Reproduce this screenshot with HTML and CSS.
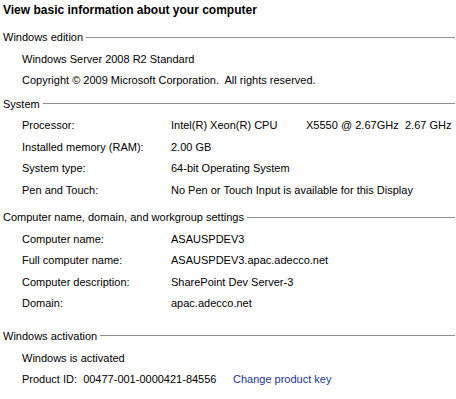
FILE: index.html
```html
<!DOCTYPE html>
<html lang="en">
<head>
     <meta charset="UTF-8">
     <title>System</title>
     <link rel="stylesheet" href="styles.css">
</head>
<body>

<h1 class="title">View basic information about your computer</h1>

<div class="group">
    <div class="group-head"><span>Windows edition</span></div>
    <div class="rows">
        <div class="row">Windows Server 2008 R2 Standard</div>
        <div class="row">Copyright &copy; 2009 Microsoft Corporation.&nbsp; All rights reserved.</div>
    </div>
</div>

<div class="group group-system">
    <div class="group-head"><span>System</span></div>
    <div class="rows">
        <div class="row">
            <span class="label">Processor:</span>
            <span class="value"><span class="cpu">Intel(R) Xeon(R) CPU</span><span class="cpu-model">X5550</span><span class="cpu-clock">@ 2.67GHz</span><span>2.67 GHz</span></span>
        </div>
        <div class="row">
            <span class="label">Installed memory (RAM):</span>
            <span class="value">2.00 GB</span>
        </div>
        <div class="row">
            <span class="label">System type:</span>
            <span class="value">64-bit Operating System</span>
        </div>
        <div class="row">
            <span class="label">Pen and Touch:</span>
            <span class="value">No Pen or Touch Input is available for this Display</span>
        </div>
    </div>
</div>

<div class="group group-name">
    <div class="group-head"><span>Computer name, domain, and workgroup settings</span></div>
    <div class="rows">
        <div class="row">
            <span class="label">Computer name:</span>
            <span class="value">ASAUSPDEV3</span>
        </div>
        <div class="row">
            <span class="label">Full computer name:</span>
            <span class="value">ASAUSPDEV3.apac.adecco.net</span>
        </div>
        <div class="row">
            <span class="label">Computer description:</span>
            <span class="value">SharePoint Dev Server-3</span>
        </div>
        <div class="row">
            <span class="label">Domain:</span>
            <span class="value">apac.adecco.net</span>
        </div>
    </div>
</div>

<div class="group group-activation">
    <div class="group-head"><span>Windows activation</span></div>
    <div class="rows">
        <div class="row">Windows is activated</div>
        <div class="row">
            <span class="pid">Product ID:  00477-001-0000421-84556</span>
            <a class="link" href="#">Change product key</a>
        </div>
    </div>
</div>

</body>
</html>
```

FILE: styles.css
```css
body {
    margin: 0;
    font-family: "Liberation Sans", Arial, sans-serif;
    font-size: 11px;
    color: #000;
    background-color: #fff;
}

.title {
    margin: 0;
    padding-left: 3px;
    height: 20px;
    line-height: 20px;
    font-size: 12px;
    font-weight: bold;
}

.group {
    margin-top: 9px;
}

.group-system {
    margin-top: 5px;
}

.group-name {
    margin-top: 9px;
}

.group-activation {
    margin-top: 14px;
}

/* section header with the rule after it */
.group-head {
    display: flex;
    align-items: center;
    height: 16px;
    padding-left: 3px;
    padding-right: 1px;
}

.group-head::after {
    content: "";
    flex: 1;
    border-top: 1px solid #8e8e8e;
    margin-left: 3px;
}

.rows {
    padding-top: 3px;
    padding-left: 22px;
}

.row {
    display: flex;
    align-items: center;
    height: 21.4px;
    white-space: nowrap;
}

.label {
    width: 149px;
}

.cpu {
    display: inline-block;
    width: 135px;
}

.cpu-model {
    display: inline-block;
    width: 35px;
}

.cpu-clock {
    display: inline-block;
    width: 64px;
}

.pid {
    white-space: pre;
    width: 211px;
}

.link {
    color: #1a3399;
    text-decoration: none;
}
```
